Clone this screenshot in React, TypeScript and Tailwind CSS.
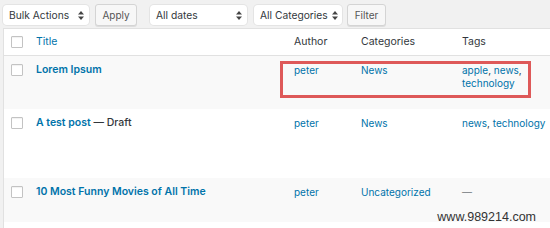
const link = "text-[#0073aa]";

function SelectBox({ label, width }: { label: string; width: string }) {
  return (
    <div
      className={`${width} h-[20px] mt-[1px] bg-white rounded-[4px] shadow-[0_0_0_1px_#e4e4e4] flex items-center justify-between gap-[4px] pl-[6px] pr-[5px] text-[#32373c] whitespace-nowrap`}
    >
      <span>{label}</span>
      <svg width="6" height="9" viewBox="0 0 6 9" className="fill-[#444] shrink-0">
        <path d="M3 0L6 3.5H0z" />
        <path d="M3 9L0 5.5H6z" />
      </svg>
    </div>
  );
}

function Button({ label, width }: { label: string; width: string }) {
  return (
    <div
      className={`${width} h-[22px] bg-[#f7f7f7] border border-[#d4d4d4] rounded-[3px] flex items-center justify-center text-[#555] text-[10px] shadow-[0_1px_0_#ddd]`}
    >
      {label}
    </div>
  );
}

function Checkbox() {
  return <div className="w-[12px] h-[12px] bg-white border border-[#c3c3c3] rounded-[1px] shadow-[inset_0_1px_1px_rgba(0,0,0,0.06)]" />;
}

type Post = {
  title: string;
  draft?: boolean;
  category: string;
  tags: string[] | null;
  height: string;
  bg: string;
};

const posts: Post[] = [
  { title: "Lorem Ipsum", category: "News", tags: ["apple", "news", "technology"], height: "h-[53px]", bg: "bg-[#f9f9f9]" },
  { title: "A test post", draft: true, category: "News", tags: ["news", "technology"], height: "h-[69px]", bg: "bg-white" },
  { title: "10 Most Funny Movies of All Time", category: "Uncategorized", tags: null, height: "h-[44px]", bg: "bg-[#f9f9f9]" },
];

const cols = "grid grid-cols-[32px_249px_67px_101px_1fr]";

export default function App() {
  return (
    <div className="relative w-[550px] h-[228px] overflow-hidden bg-[#f1f1f1] font-['Inter',sans-serif] text-[10px] leading-[14px]">
      <div className="h-[28px] flex items-start pt-[4px] pl-[3px] text-[10.25px]">
        <SelectBox label="Bulk Actions" width="w-[86px]" />
        <div className="ml-[6px]">
          <Button label="Apply" width="w-[42px]" />
        </div>
        <div className="ml-[13px]">
          <SelectBox label="All dates" width="w-[97px]" />
        </div>
        <div className="ml-[7px]">
          <SelectBox label="All Categories" width="w-[88px]" />
        </div>
        <div className="ml-[5px]">
          <Button label="Filter" width="w-[39px]" />
        </div>
      </div>

      <div className="ml-[3px] border-l border-t border-[#e1e1e1] bg-white h-full">
        <div className={`${cols} h-[27px] items-center border-b border-[#e1e1e1] text-[#32373c] text-[10.5px]`}>
          <div className="pl-[7px] flex">
            <Checkbox />
          </div>
          <div className={link}>Title</div>
          <div className="pl-[9px]">Author</div>
          <div className="pl-[9px]">Categories</div>
          <div className="pl-[9px]">Tags</div>
        </div>

        {posts.map((p, i) => (
          <div key={i} className={`${cols} ${p.height} ${p.bg} relative pt-[7px]`}>
            <div className="pl-[7px] pt-[1px]">
              <Checkbox />
            </div>
            <div className="text-[10.5px]">
              <span className={`${link} font-semibold`}>{p.title}</span>
              {p.draft && <span className="text-[#32373c] font-medium"> — Draft</span>}
            </div>
            <div className={`pl-[9px] ${link}`}>peter</div>
            <div className={`pl-[9px] ${link}`}>{p.category}</div>
            <div className="pl-[9px] leading-[13px] pt-[1px]">
              {p.tags ? (
                p.tags.map((t, j) => (
                  <span key={t}>
                    <span className={link}>{t}</span>
                    {j < p.tags!.length - 1 && <span className="text-[#32373c]">, </span>}
                  </span>
                ))
              ) : (
                <span className="text-[#72777c]">—</span>
              )}
            </div>
            {i === 0 && (
              <div className="absolute left-[276px] top-[5px] w-[251px] h-[37px] border-[3px] border-[#de5959]" />
            )}
          </div>
        ))}
      </div>

      <div className="absolute right-[14px] bottom-[5px] font-['Liberation_Sans',sans-serif] text-[12.5px] leading-[12px] text-[#333]">
        www.989214.com
      </div>
    </div>
  );
}
